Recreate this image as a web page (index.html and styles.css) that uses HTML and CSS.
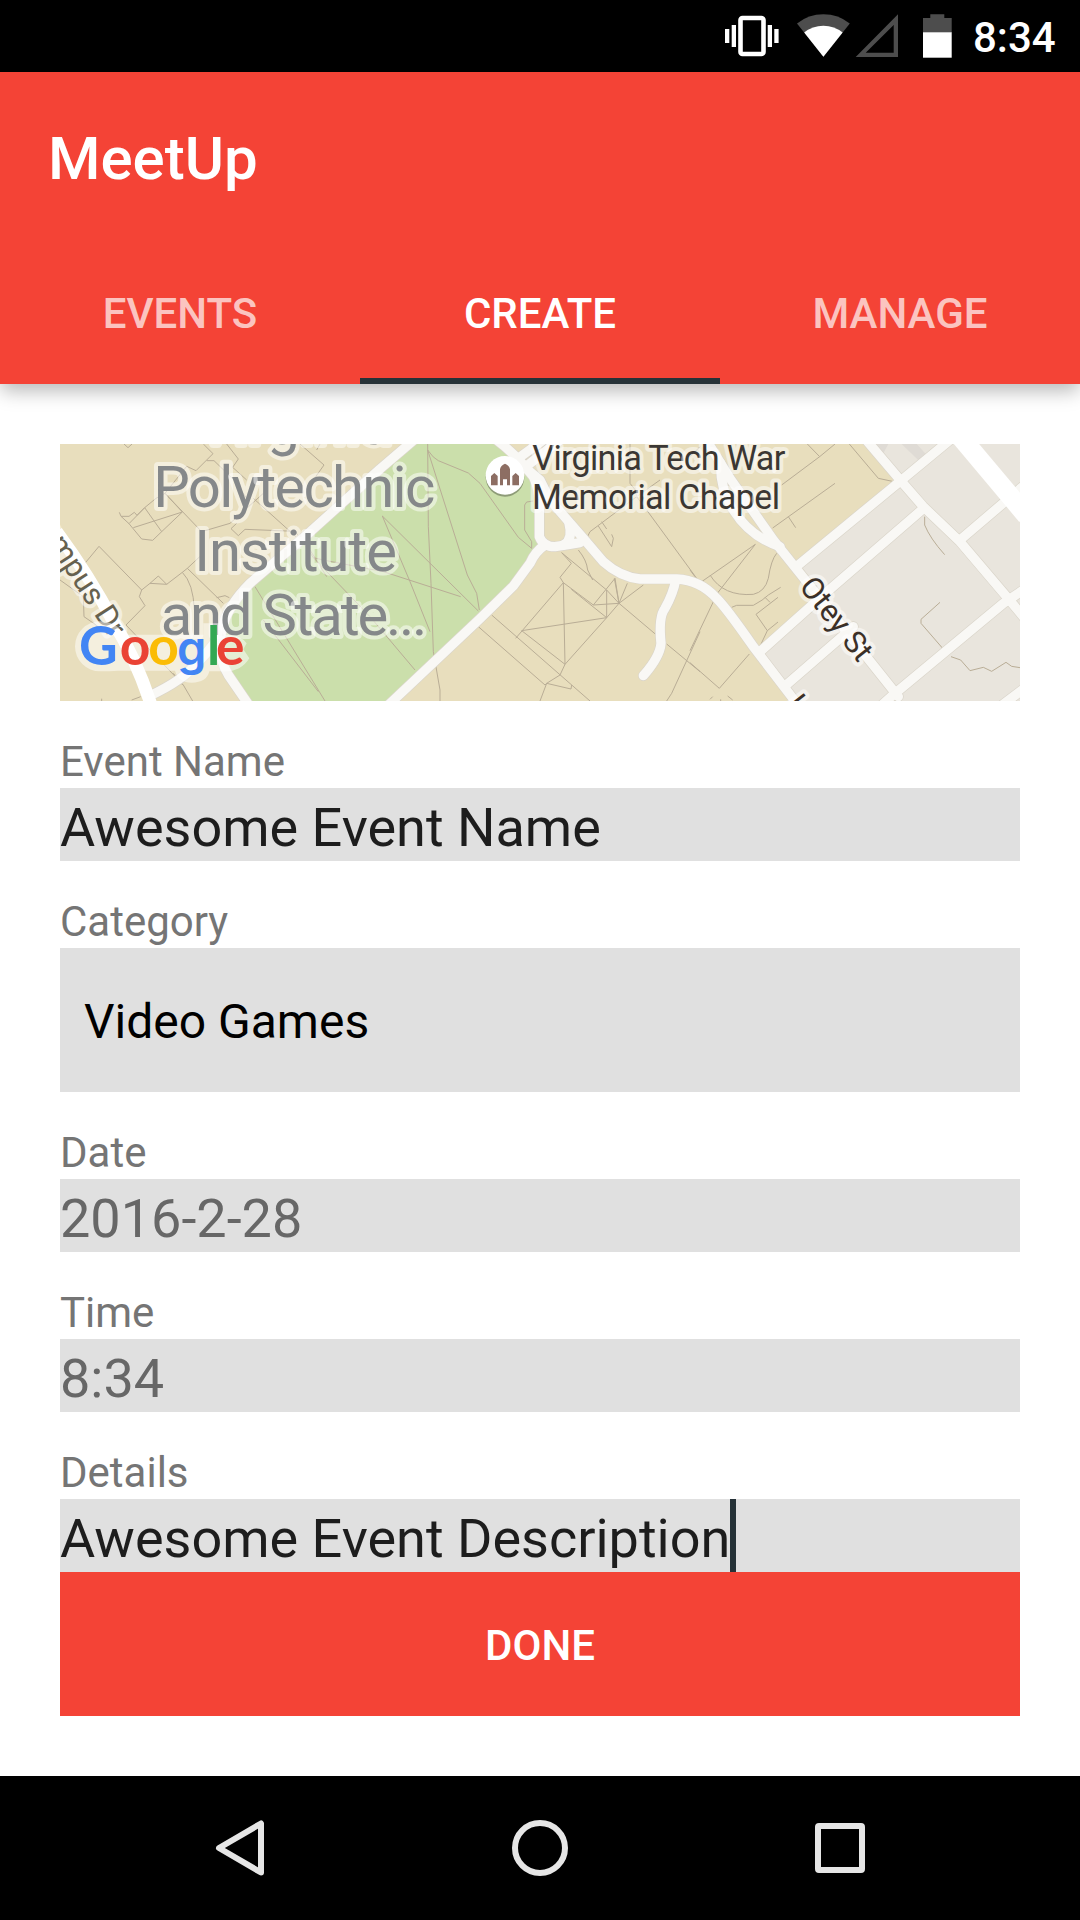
FILE: index.html
```html
<!DOCTYPE html>
<html lang="en">
<head>
    <meta charset="UTF-8">
    <meta name="viewport" content="width=device-width, initial-scale=1.0">
    <title>MeetUp</title>
    <link rel="stylesheet" href="styles.css">
</head>
<body>
    <div class="status-bar">
        <svg width="66" height="72" viewBox="720 0 66 72">
            <rect x="740.5" y="18" width="23" height="36" rx="2" fill="none" stroke="#fff" stroke-width="4.6"/>
            <path fill="#fff" d="M725 29h4.3v14H725zM731.7 25h4.3v22h-4.3zM767.7 25h4.3v22h-4.3zM774.3 29h4.3v14h-4.3z"/>
        </svg>
        <svg width="67" height="72" viewBox="786 0 67 72">
            <path fill="#4d4d4d" d="M823.4 56.7L797 23.5Q808.500 14.300 823.400 14.300T849.800 23.500z"/>
            <path fill="#fff" d="M823.4 56.7L804.200 32.500Q812.500 25.700 823.400 25.700T842.600 32.500z"/>
        </svg>
        <svg width="57" height="72" viewBox="853 0 57 72">
            <path fill="#4d4d4d" fill-rule="evenodd" d="M855.700 57L898 14.300V57zM865.700 52.700H893.700V25z"/>
        </svg>
        <svg width="63" height="72" viewBox="910 0 63 72">
            <path fill="#4d4d4d" d="M923 33V18h7.300v-3.700h14V18h7.400v15z"/>
            <path fill="#fff" d="M923 32.300h28.700v25.400H923z"/>
        </svg>
        <span class="clock">8:34</span>
    </div>

    <header class="app-bar">
        <h1 class="title">MeetUp</h1>
        <nav class="tabs">
            <a class="tab">EVENTS</a>
            <a class="tab active">CREATE</a>
            <a class="tab">MANAGE</a>
        </nav>
    </header>

    <main class="form">
        <svg class="map" viewBox="30 42 2880 771" preserveAspectRatio="none">
            <rect x="30" y="42" width="2880" height="771" fill="#e8debd"/>
            <!-- park -->
            <path fill="#cbdfab" d="M1100 42L990 130L770 330L600 470L530 560L510 680L590 813H1010L1290 565L1390 465L1440 400L1470 350L1468 250L1450 150L1400 90L1350 42z"/>
            <!-- town blocks -->
            <path fill="#e9e5dd" d="M2450 42L2555 150L2250 405L2330 510L2130 670L2220 813H2910V42z"/>
            <path fill="#dfdbd5" d="M2470 42H2515L2500 70zM2555 42H2600L2630 75L2610 95z"/>

            <!-- footpaths -->
            <g class="path">
                <path d="M222 42L234 53L246 42M460 42L489 71L438 122L410 109L345 190L397 246L335 305L308 331L275 327L237 281L213 259L208 247M213 259H237L253 247L261 256L284 233L318 205L345 190M250 293L397 246M237 281L284 233L335 305M470 92H492L552 150L590 205M530 42L565 87L548 112L590 150M345 190L455 305M750 42L822 105L790 150M810 42L800 60M610 205L740 322M560 280L543 296L565 317L585 298L735 304M455 305L540 280L640 190M30 450L100 500L102 560L160 600M98 408L147 349L275 480L268 500L285 527L228 585M275 480L300 460L350 463L325 438L300 460M350 463L397 427L412 415L520 520M397 427Q430 460 433 540M412 415L460 370M500 503L525 497L538 503M228 585L400 765L428 813M272 800L245 810M155 806V813M398 765L370 730M615 470L825 813M740 310L790 383L830 392L1000 425L1232 500M790 383L960 560L1095 720M640 570L805 785M780 360L830 440"/>
                <path transform="translate(960)" d="M173 42L175 290L183 460L190 665L210 780V813M173 60L292 435L320 490L328 540M173 60Q190 85 205 92L295 129L330 160L445 322L485 355V335L464 300V225L470 216L490 213M37 258L325 543M37 258L120 455L180 605M325 590L525 765L530 760L603 777L605 765M365 555L660 813M437 625L580 458L670 525L747 520L857 613L880 605M570 442L604 400L575 368M570 442L580 458L585 703L570 735L530 760L510 813M455 602L710 563L585 703L455 602M575 368L710 480V563L604 478M670 525L735 445L747 520L710 563M710 480L747 520L820 465M733 445L747 520L772 460M625 360Q650 390 653 420L668 450M650 325L660 305L800 200L870 150M685 288L725 350L730 325L725 313M695 275L710 297M800 200V185L780 160V42M800 200L830 240L980 445M890 642L990 725M890 813L905 790L990 605"/>
                <path transform="translate(1920)" d="M30 50L0 80M352 42L389 80L435 42M478 42L565 145L607 154M389 80L275 165M248 294L435 160M295 260L317 293M196 343L35 455M196 343L82 490L0 662M60 435Q100 500 190 493Q225 485 235 445Q243 390 260 370M125 532L140 526H190Q220 510 235 495L272 472M198 553L264 502M225 502L240 517M198 553L232 602L264 576M232 602L208 653M0 698L88 775L178 672M60 808L68 800M113 798L128 810M92 808V813M0 420L15 440M704 260V285Q720 325 764 374M750 517L693 568V580L758 655M783 680L812 690L840 722L880 712L905 724L948 697L965 709L990 713"/>
            </g>

            <!-- streets, drawn twice so the lighter fill keeps a thin edge -->
            <defs>
                <g id="streets">
                    <path d="M1115 10L990 117L770 315L600 460Q530 530 515 600Q500 680 535 735L600 830"/>
                    <path d="M300 797Q400 750 440 700Q500 640 515 600"/>
                    <path d="M1010 830L1290 566L1390 468L1440 400Q1455 365 1485 345"/>
                    <path d="M1340 30Q1400 75 1450 140Q1470 180 1468 240V320Q1480 350 1515 350Q1550 345 1590 338"/>
                    <path d="M1405 85L1480 30M1430 108L1530 30M1410 100L1470 150L1500 210L1600 325L1660 395Q1710 440 1770 447H1880Q1950 450 2000 505Q2030 535 2110 650L2240 820"/>
                    <path d="M1557 280Q1570 330 1540 345"/>
                    <path d="M1877 450Q1870 490 1845 535Q1825 560 1833 640Q1830 680 1780 737"/>
                    <path d="M1963 20L2040 145L2170 330L2250 430L2545 800"/>
                    <path d="M2012 100Q2010 180 2050 240Q2100 320 2190 350"/>
                    <path d="M2700 30L2555 150L2245 405M2615 240L2320 495L2130 665M2410 590L2205 768M2920 480L2860 520L2535 790L2490 830M2730 330L2920 168"/>
                    <path d="M2440 20L2555 155L2620 230L2730 335L2870 500L2930 572M2850 830L2930 770"/>
                </g>
            </defs>
            <use href="#streets" class="street-edge"/>
            <use href="#streets" class="street"/>
            <path class="avenue" d="M20 305Q120 440 190 575Q260 690 305 830"/>
            <path class="highway" d="M2710 -5L2930 257"/>

            <!-- labels -->
            <g class="campus" text-anchor="middle">
                <text x="733" y="41">Virginia</text>
                <text x="733" y="232" textLength="846">Polytechnic</text>
                <text x="737" y="423" textLength="608">Institute</text>
                <text x="732" y="614" textLength="800">and State...</text>
            </g>
            <text class="road-name campus-drive" text-anchor="end" transform="translate(180 628) rotate(57)">Campus Dr</text>
            <text class="road-name" transform="translate(2245 470) rotate(52)">Otey St</text>
            <text class="road-name" transform="translate(2205 824) rotate(52)">L</text>
            <g class="place">
                <text x="1447" y="119" textLength="759">Virginia Tech War</text>
                <text x="1446" y="236" textLength="744">Memorial Chapel</text>
            </g>
            <circle cx="1365" cy="142" r="58" fill="#000" opacity=".3"/>
            <circle cx="1365" cy="136" r="58" fill="#fff"/>
            <path fill="#8d6e63" d="M1350 166V118Q1352 106 1365 101Q1378 106 1380 118V166H1371V148H1359V166zM1323 166V138L1333 129L1343 138V166zM1387 166V138L1397 129L1407 138V166z"/>

            <!-- google logo with its light backing -->
            <path class="logo-back" d="M150 574Q180 574 205 592L222 614H460V580H508V620Q560 602 590 640L580 658L598 685Q570 730 510 724H478Q470 758 425 758Q385 758 375 722H205Q182 724 150 724A75 75 0 0 1 150 574z"/>
            <text class="google" y="705"><tspan x="87" fill="#4285f4">G</tspan><tspan x="209" fill="#ea4335">o</tspan><tspan x="295" fill="#fbbc05">o</tspan><tspan x="381" fill="#4285f4" class="google-g">g</tspan><tspan x="471" fill="#34a853">l</tspan><tspan x="498" fill="#ea4335">e</tspan></text>
        </svg>

        <label class="label">Event Name</label>
        <div class="field">Awesome Event Name</div>

        <label class="label">Category</label>
        <div class="spinner">Video Games</div>

        <label class="label">Date</label>
        <div class="field hint">2016-2-28</div>

        <label class="label">Time</label>
        <div class="field hint">8:34</div>

        <label class="label">Details</label>
        <div class="field">Awesome Event Description<span class="cursor"></span></div>

        <button class="done">DONE</button>
    </main>

    <footer class="nav-bar">
        <svg width="72" height="72" viewBox="0 0 72 72">
            <path d="M57 11.500V60.500L15 36z"/>
        </svg>
        <svg width="72" height="72" viewBox="0 0 72 72">
            <circle cx="36" cy="36" r="25"/>
        </svg>
        <svg width="72" height="72" viewBox="0 0 72 72">
            <rect x="14" y="14" width="44" height="44" rx="1"/>
        </svg>
    </footer>
</body>
</html>
```
FILE: styles.css
```css
* {
    box-sizing: border-box;
}
body {
    font-family: Roboto, sans-serif;
    display: flex;
    flex-direction: column;
    height: 1920px;
    margin: 0;
    background-color: #fff;
}
.status-bar {
    display: flex;
    justify-content: flex-end;
    height: 72px;
    padding-right: 24px;
    background-color: #000;
}
.clock {
    width: 83px;
    color: #fff;
    font-size: 42px;
    font-weight: 500;
    line-height: 76px;
}

/* app bar */
.app-bar {
    height: 312px;
    background-color: #f44336;
    box-shadow: 0 8px 18px -1px rgba(0,0,0,0.28);
}
.title {
    height: 168px;
    margin: 0;
    padding-left: 48px;
    color: #fff;
    font-size: 60px;
    font-weight: 500;
    line-height: 174px;
}
.tabs {
    display: flex;
    height: 144px;
}
.tab {
    flex: 1;
    color: rgba(255,255,255,0.7);
    font-size: 42px;
    font-weight: 500;
    line-height: 147px;
    text-align: center;
}
.tab.active {
    color: #fff;
    border-bottom: 6px solid #263238;
}

/* form */
.form {
    flex: 1;
    display: flex;
    flex-direction: column;
    padding: 60px 60px 0;
}
.map {
    display: block;
    width: 960px;
    height: 257px;
}
.label {
    margin-top: 34px;
    color: #757575;
    font-size: 42px;
    line-height: 53px;
}
.field {
    display: flex;
    height: 73px;
    color: #1d1d1d;
    background-color: #e0e0e0;
    font-size: 54px;
    line-height: 79px;
}
.hint {
    color: #676767;
}
.cursor {
    width: 6px;
    background-color: #263238;
}
.spinner {
    height: 144px;
    padding-left: 24px;
    color: #000;
    background-color: #e0e0e0;
    font-size: 48px;
    line-height: 147px;
}
.done {
    height: 144px;
    padding: 0;
    border: none;
    color: #fff;
    background-color: #f44336;
    font-family: inherit;
    font-size: 42px;
    font-weight: 500;
    line-height: 147px;
}

/* map */
.path {
    fill: none;
    stroke: #b9ad96;
    stroke-width: 3;
}
.street,
.street-edge {
    fill: none;
    stroke: #f9f8f5;
    stroke-width: 28;
    stroke-linecap: round;
    stroke-linejoin: round;
}
.street-edge {
    stroke: #dad5ca;
    stroke-width: 32;
}
.avenue,
.highway {
    fill: none;
    stroke: #fff;
    stroke-width: 38;
}
.highway {
    stroke-width: 58;
}
.campus,
.place,
.road-name {
    paint-order: stroke;
    stroke: rgba(255,255,255,0.5);
    stroke-width: 24;
    stroke-linejoin: round;
}
.campus {
    fill: #85888a;
    font-size: 174px;
}
.place {
    fill: #3b3733;
    font-size: 103px;
}
.road-name {
    fill: #3b3028;
    font-size: 92px;
}
.campus-drive {
    fill: #66614f;
}
.logo-back {
    fill: rgba(255,255,255,0.5);
}
.google {
    font-family: Lato, sans-serif;
    font-size: 160px;
    font-weight: 700;
}
.google-g {
    font-family: Inter, sans-serif;
    font-size: 141px;
    font-weight: 600;
}

/* navigation bar */
.nav-bar {
    display: flex;
    justify-content: space-between;
    align-items: center;
    height: 144px;
    padding: 0 204px;
    background-color: #000;
}
.nav-bar svg {
    fill: none;
    stroke: #e6e6e6;
    stroke-width: 6;
    stroke-linejoin: round;
}
```
